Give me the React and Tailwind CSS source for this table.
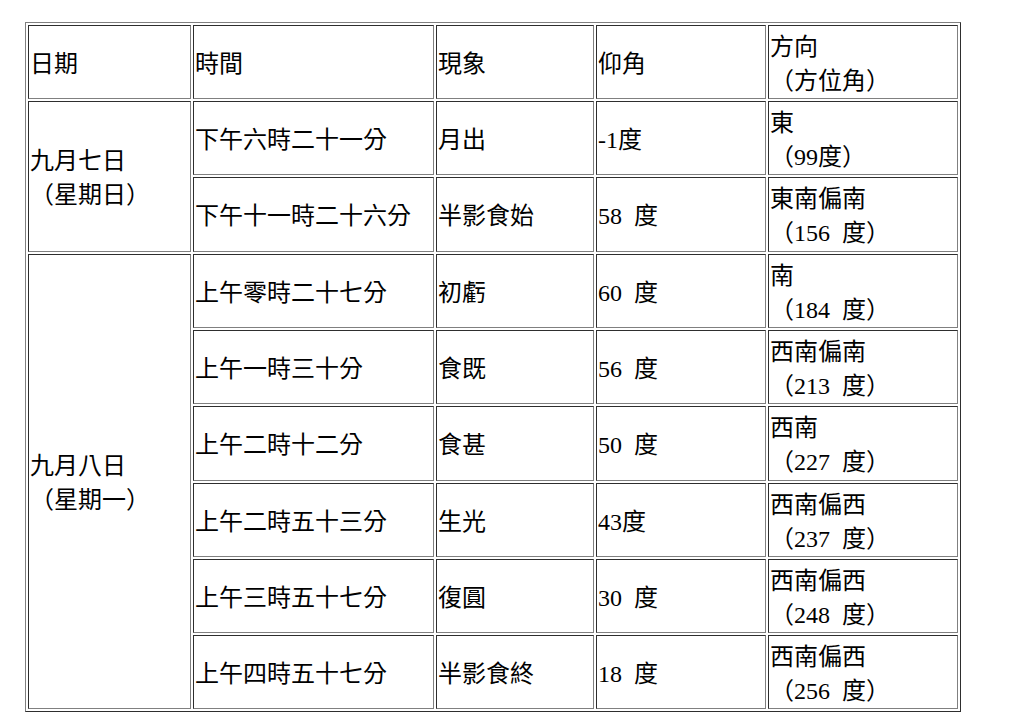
import React from 'react';

const rows = [
  { time: '下午十一時二十六分', event: '半影食始', alt: '58 度', dir: '東南偏南', az: '（156 度）', h: 'h-[75px]' },
  { time: '上午零時二十七分', event: '初虧', alt: '60 度', dir: '南', az: '（184 度）', h: 'h-[74px]' },
  { time: '上午一時三十分', event: '食既', alt: '56 度', dir: '西南偏南', az: '（213 度）', h: 'h-[74px]' },
  { time: '上午二時十二分', event: '食甚', alt: '50 度', dir: '西南', az: '（227 度）', h: 'h-[75px]' },
  { time: '上午二時五十三分', event: '生光', alt: '43度', dir: '西南偏西', az: '（237 度）', h: 'h-[74px]' },
  { time: '上午三時五十七分', event: '復圓', alt: '30 度', dir: '西南偏西', az: '（248 度）', h: 'h-[74px]' },
  { time: '上午四時五十七分', event: '半影食終', alt: '18 度', dir: '西南偏西', az: '（256 度）', h: 'h-[74px]' },
];

const cell =
  'border border-solid border-t-[#2e2e2e] border-l-[#2e2e2e] border-b-[#808080] border-r-[#808080] px-px pt-[3px] pb-0 text-left align-middle';

const App = () => {
  return (
    <div className="min-h-screen bg-white pl-[25px] pt-[22px] text-black font-['Liberation_Serif','Noto_Sans_CJK_TC',serif] text-[24px] leading-[34px] [word-spacing:6px]">
      <table className="border-separate border-spacing-[2px] border border-solid border-t-[#808080] border-l-[#808080] border-b-[#2e2e2e] border-r-[#2e2e2e]">
        <tbody>
          <tr>
            <td className={`${cell} w-[163px] h-[74px]`}>日期</td>
            <td className={`${cell} w-[241px]`}>時間</td>
            <td className={`${cell} w-[158px]`}>現象</td>
            <td className={`${cell} w-[170px]`}>仰角</td>
            <td className={`${cell} w-[190px]`}>方向<br />（方位角）</td>
          </tr>
          <tr>
            <td className={cell} rowSpan={2}>九月七日<br />（星期日）</td>
            <td className={`${cell} h-[74px]`}>下午六時二十一分</td>
            <td className={cell}>月出</td>
            <td className={cell}>-1度</td>
            <td className={cell}>東<br />（99度）</td>
          </tr>
          {rows.map((r, i) => (
            <tr key={i}>
              {i === 1 && (
                <td className={cell} rowSpan={6}>九月八日<br />（星期一）</td>
              )}
              <td className={`${cell} ${r.h}`}>{r.time}</td>
              <td className={cell}>{r.event}</td>
              <td className={cell}>{r.alt}</td>
              <td className={cell}>{r.dir}<br />{r.az}</td>
            </tr>
          ))}
        </tbody>
      </table>
    </div>
  );
};

export default App;
